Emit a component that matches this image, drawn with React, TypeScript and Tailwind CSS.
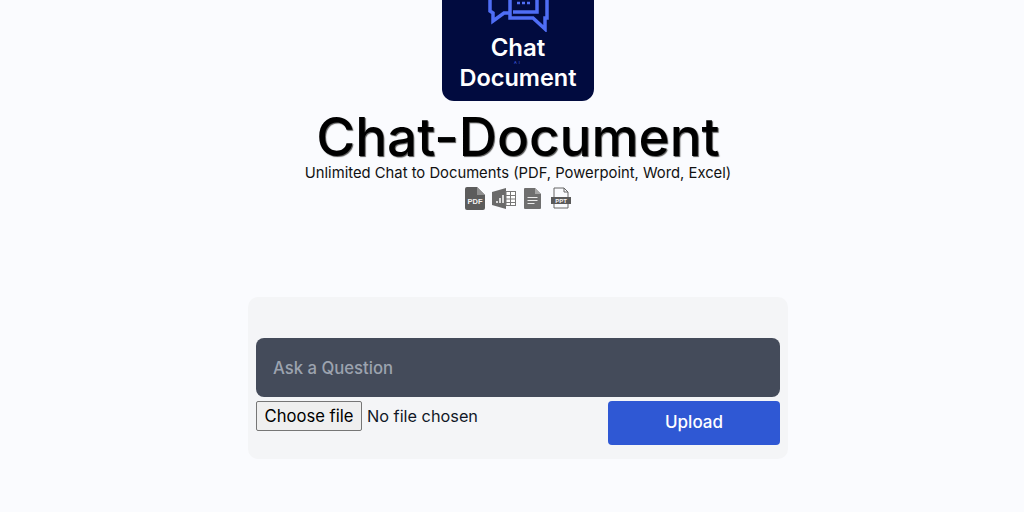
import React from 'react';

const PdfIcon = () => (
  <svg width="20" height="23" viewBox="0 0 20 23">
    <path d="M0 2a2 2 0 0 1 2-2h10l8 8v13a2 2 0 0 1-2 2H2a2 2 0 0 1-2-2z" fill="#5c5c5c" />
    <path d="M12 0l8 8h-8z" fill="#8f8f8f" />
    <text x="10" y="16.5" textAnchor="middle" fontSize="7.5" fontWeight="700" fill="#f2f2f2" fontFamily="Liberation Sans, sans-serif">PDF</text>
  </svg>
);

const SheetIcon = () => (
  <svg width="24" height="21" viewBox="0 0 24 21">
    <path d="M0 4l14-4v21L0 17z" fill="#6a6a6a" />
    <path d="M4 13h2v2H4zM7 10h2v5H7zM10 7h2v8h-2z" fill="#d8d8d8" />
    <rect x="14" y="3.5" width="9.5" height="14" fill="#fff" stroke="#777" />
    <path d="M14 7.5h10M14 11h10M14 14.5h10M18.5 3.5v14" stroke="#777" />
  </svg>
);

const DocIcon = () => (
  <svg width="17" height="21" viewBox="0 0 17 21">
    <path d="M0 1a1 1 0 0 1 1-1h10l6 6v14a1 1 0 0 1-1 1H1a1 1 0 0 1-1-1z" fill="#6f6f6f" />
    <path d="M11 0l6 6h-6z" fill="#a6a6a6" />
    <path d="M3.5 9.5h10M3.5 12.5h10M3.5 15.5h7" stroke="#ececec" strokeWidth="1.2" />
  </svg>
);

const PptIcon = () => (
  <svg width="20" height="22" viewBox="0 0 20 22">
    <path d="M3 10V1h10l4 4v5M3 17v4h14v-4" fill="none" stroke="#666" />
    <path d="M13 1v4h4" fill="none" stroke="#666" />
    <rect x="0" y="10" width="20" height="7" fill="#5a5a5a" />
    <text x="10" y="16" textAnchor="middle" fontSize="6" fontWeight="700" fill="#f5f5f5" fontFamily="Liberation Sans, sans-serif">PPT</text>
  </svg>
);

export default function App() {
  return (
    <div className="w-[1024px] h-[512px] overflow-hidden bg-[#fafbfe] font-['Inter',sans-serif] flex flex-col items-center">
      <div className="ml-[12px] w-[152px] h-[101px] bg-[#010b3f] rounded-b-[12px] overflow-hidden flex flex-col items-center">
        <svg width="64" height="32" viewBox="0 0 64 32" fill="none" stroke="#4f6ef5" strokeWidth="3.5" className="shrink-0">
          <path d="M4 -4V11L7 13V21L18 13H24" />
          <path d="M24 -4V18H47L59 29V18H61V-4" />
          <path d="M27 12H51V-2" />
          <path d="M31 3h3M36 3h3M41 3h3" strokeWidth="2.5" />
        </svg>
        <div className="mt-[2px] text-[24px] leading-[27px] font-semibold text-white">Chat</div>
        <div className="text-[4px] leading-[4px] tracking-[2px] text-[#4f6ef5]">AI</div>
        <div className="text-[23.5px] leading-[27px] -mt-[1px] font-semibold text-white">Document</div>
      </div>
      <h1 className="ml-[12px] mt-[10px] text-[53px] leading-[52px] font-medium text-black [text-shadow:1px_1px_1px_#555]">Chat-Document</h1>
      <p className="ml-[12px] text-[14.8px] leading-[20px] text-[#111]">Unlimited Chat to Documents (PDF, Powerpoint, Word, Excel)</p>
      <div className="ml-[12px] mt-[3px] flex items-center h-[24px]">
        <PdfIcon />
        <div className="ml-[7px]"><SheetIcon /></div>
        <div className="ml-[8px]"><DocIcon /></div>
        <div className="ml-[10px]"><PptIcon /></div>
      </div>
      <div className="ml-[12px] mt-[87px] w-[540px] h-[162px] bg-[#f4f5f7] rounded-[10px] px-[8px] pt-[41px]">
        <input
          placeholder="Ask a Question"
          className="block w-full h-[59px] px-[17px] rounded-[8px] bg-[#444b5a] text-[16.7px] font-medium outline-none placeholder:text-[#9ca3af]"
        />
        <div className="mt-[4px] flex items-start justify-between">
          <label className="flex items-center text-[16.3px]">
            <input type="file" className="hidden" />
            <span className="h-[30px] w-[106px] flex items-center justify-center bg-[#efefef] border border-[#767676] rounded-[2px] text-black text-[16.6px]">Choose file</span>
            <span className="ml-[5px] text-[#111827]">No file chosen</span>
          </label>
          <button className="w-[172px] h-[44px] rounded-[4px] bg-[#2f58d4] text-white text-[17px] font-medium">Upload</button>
        </div>
      </div>
    </div>
  );
}
